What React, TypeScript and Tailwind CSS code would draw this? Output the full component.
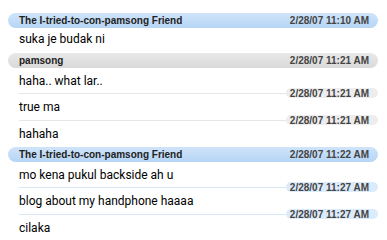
import React from 'react';

type Msg = { text: string; time?: string };
type Group = { sender: string; time: string; tone: 'blue' | 'gray'; msgs: Msg[] };

const groups: Group[] = [
  {
    sender: 'The I-tried-to-con-pamsong Friend',
    time: '2/28/07 11:10 AM',
    tone: 'blue',
    msgs: [{ text: 'suka je budak ni' }],
  },
  {
    sender: 'pamsong',
    time: '2/28/07 11:21 AM',
    tone: 'gray',
    msgs: [
      { text: 'haha.. what lar..' },
      { text: 'true ma', time: '2/28/07 11:21 AM' },
      { text: 'hahaha', time: '2/28/07 11:21 AM' },
    ],
  },
  {
    sender: 'The I-tried-to-con-pamsong Friend',
    time: '2/28/07 11:22 AM',
    tone: 'blue',
    msgs: [
      { text: 'mo kena pukul backside ah u' },
      { text: 'blog about my handphone haaaa', time: '2/28/07 11:27 AM' },
      { text: 'cilaka', time: '2/28/07 11:27 AM' },
    ],
  },
];

function Header({ g }: { g: Group }) {
  const bar =
    g.tone === 'blue'
      ? 'bg-gradient-to-b from-[#cfe4fa] to-[#b6d5f5]'
      : 'bg-gradient-to-b from-[#e9e9e9] to-[#d9d9d9]';
  return (
    <div
      className={`ml-[8px] mr-[9px] h-[15px] rounded-full ${bar} flex items-center justify-between pl-[11px] pr-[9px] text-[10px] font-bold text-[#222] font-['Liberation_Sans',Arial,sans-serif]`}
    >
      <span>{g.sender}</span>
      <span className="text-[#444]">{g.time}</span>
    </div>
  );
}

function Separator({ time, tone }: { time: string; tone: 'blue' | 'gray' }) {
  const line = tone === 'blue' ? 'bg-[#d6e7f8]' : 'bg-[#e6e6e6]';
  const pill = tone === 'blue' ? 'bg-[#dcebfb]' : 'bg-[#ededed]';
  return (
    <div className="flex items-center h-[10px] -my-[5px]">
      <div className={`flex-1 ml-[19px] h-px ${line}`} />
      <div
        className={`w-[92px] h-[10px] mr-[9px] rounded-full ${pill} flex items-center justify-end pr-[9px] text-[10px] font-bold text-[#444] font-['Liberation_Sans',Arial,sans-serif]`}
      >
        {time}
      </div>
    </div>
  );
}

export default function App() {
  return (
    <div className="w-[387px] h-[240px] overflow-hidden bg-white pt-[13px] font-['Roboto',sans-serif]">
      {groups.map((g, gi) => (
        <div key={gi}>
          <Header g={g} />
          {g.msgs.map((m, mi) => (
            <div key={mi}>
              {m.time && <Separator time={m.time} tone={g.tone} />}
              <div
                className={`${mi === 0 ? (gi === 0 ? 'h-[25px] pb-[3px]' : 'h-[25px]') : 'h-[27px]'} flex items-center pl-[19px] text-[12px] text-black`}
              >
                {m.text}
              </div>
            </div>
          ))}
        </div>
      ))}
    </div>
  );
}
